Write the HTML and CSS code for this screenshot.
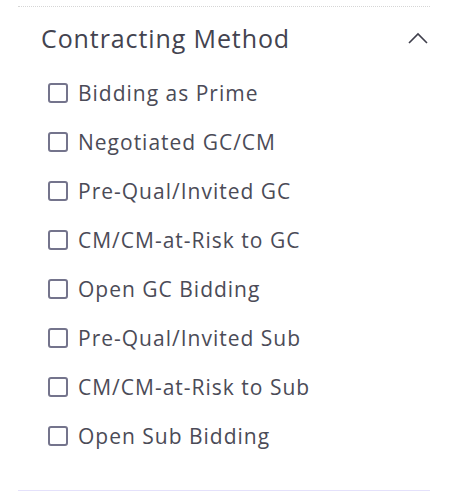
FILE: index.html
```html
<!DOCTYPE html>
<html lang="en">
<head>
    <meta charset="UTF-8">
    <meta name="viewport" content="width=device-width, initial-scale=1.0">
    <title>Contracting Method</title>
    <link rel="stylesheet" href="styles.css">
</head>
<body>
    <div class="filter-group">
        <div class="filter-header">
            <h3>Contracting Method</h3>
            <svg class="chevron" width="20" height="12" viewBox="0 0 20 12">
                <path d="M1 11 L10 2 L19 11" fill="none" stroke="#3f3f4c" stroke-width="1.6"/>
            </svg>
        </div>
        <ul class="options">
            <li><label><span class="box"></span>Bidding as Prime</label></li>
            <li><label><span class="box"></span>Negotiated GC/CM</label></li>
            <li><label><span class="box"></span>Pre-Qual/Invited GC</label></li>
            <li><label><span class="box"></span>CM/CM-at-Risk to GC</label></li>
            <li><label><span class="box"></span>Open GC Bidding</label></li>
            <li><label><span class="box"></span>Pre-Qual/Invited Sub</label></li>
            <li><label><span class="box"></span>CM/CM-at-Risk to Sub</label></li>
            <li><label><span class="box"></span>Open Sub Bidding</label></li>
        </ul>
    </div>
</body>
</html>
```
FILE: styles.css
```css
body {
    font-family: "Open Sans", Arial, sans-serif;
    margin: 0;
    padding: 0;
    background-color: #ffffff;
    color: #4b4b57;
}
.filter-group {
    margin: 6px 20px 0 18px;
    border-top: 1px dotted #d6d6d6;
    border-bottom: 1px solid #e4e1fb;
    padding-bottom: 30px;
}
.filter-header {
    display: flex;
    justify-content: space-between;
    align-items: center;
    height: 61px;
    padding: 0 2px 0 23px;
}
.filter-header h3 {
    margin: 0;
    font-size: 25px;
    font-weight: 400;
    letter-spacing: 0.9px;
    color: #43434f;
}
.options {
    list-style: none;
    margin: 0;
    padding: 0 0 0 30px;
}
.options li {
    height: 49px;
    display: flex;
    align-items: center;
}
.options label {
    display: flex;
    align-items: center;
    gap: 10px;
    font-size: 21px;
    letter-spacing: 1px;
    cursor: pointer;
}
.box {
    flex-shrink: 0;
    width: 16px;
    height: 16px;
    border: 2px solid #74748c;
    border-radius: 3px;
    background: #fff;
}
```
